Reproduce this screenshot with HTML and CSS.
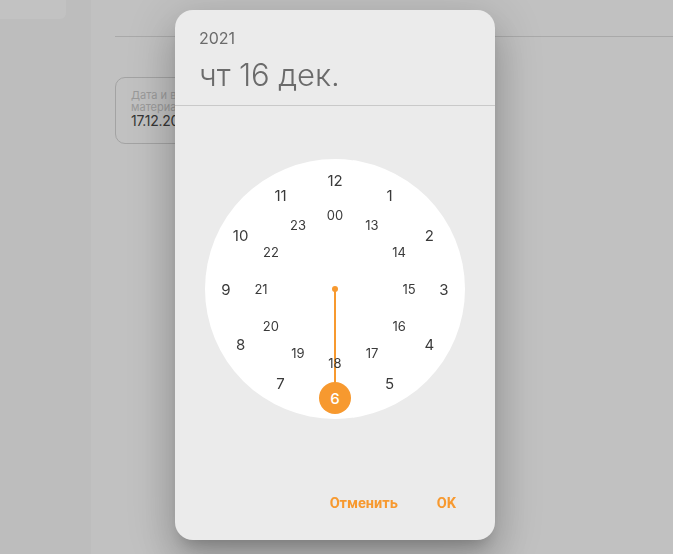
FILE: index.html
```html
<!DOCTYPE html>
<html lang="ru">
<head>
<meta charset="utf-8">
<title>Выбор времени</title>
<link rel="stylesheet" href="styles.css">
</head>
<body>
<div class="page">
  <aside class="sidebar">
    <div class="sidebar-top"></div>
  </aside>
  <main class="main">
    <div class="topbar"></div>
    <div class="field">
      <div class="field-label">Дата и время поступления<br>материала</div>
      <div class="field-value">17.12.2021 06:00</div>
    </div>
  </main>
</div>

<div class="dialog">
  <header class="dialog-head">
    <div class="year">2021</div>
    <div class="date">чт 16 дек.</div>
  </header>
  <div class="clock-wrap">
    <div class="clock">
      <div class="hand"></div>
      <div class="hub"></div>
      <div class="num outer" style="left:130px;top:21px">12</div>
      <div class="num outer" style="left:184.5px;top:35.6px">1</div>
      <div class="num outer" style="left:224.4px;top:75.5px">2</div>
      <div class="num outer" style="left:239px;top:130px">3</div>
      <div class="num outer" style="left:224.4px;top:184.5px">4</div>
      <div class="num outer" style="left:184.5px;top:224.4px">5</div>
      <div class="num outer" style="left:75.5px;top:224.4px">7</div>
      <div class="num outer" style="left:35.6px;top:184.5px">8</div>
      <div class="num outer" style="left:21px;top:130px">9</div>
      <div class="num outer" style="left:35.6px;top:75.5px">10</div>
      <div class="num outer" style="left:75.5px;top:35.6px">11</div>
      <div class="num inner" style="left:130px;top:56px">00</div>
      <div class="num inner" style="left:167px;top:65.9px">13</div>
      <div class="num inner" style="left:194.1px;top:93px">14</div>
      <div class="num inner" style="left:204px;top:130px">15</div>
      <div class="num inner" style="left:194.1px;top:167px">16</div>
      <div class="num inner" style="left:167px;top:194.1px">17</div>
      <div class="num inner" style="left:130px;top:204px">18</div>
      <div class="num inner" style="left:93px;top:194.1px">19</div>
      <div class="num inner" style="left:65.9px;top:167px">20</div>
      <div class="num inner" style="left:56px;top:130px">21</div>
      <div class="num inner" style="left:65.9px;top:93px">22</div>
      <div class="num inner" style="left:93px;top:65.9px">23</div>
      <div class="num selected" style="left:130px;top:239px">6</div>
    </div>
  </div>
  <footer class="dialog-actions">
    <button class="btn">Отменить</button>
    <button class="btn">OK</button>
  </footer>
</div>
</body>
</html>
```

FILE: styles.css
```css
* { box-sizing: border-box; }

html, body {
  margin: 0;
  height: 100%;
}

body {
  background: #c1c1c1;
  font-family: "Inter", "Noto Sans", sans-serif;
  overflow: hidden;
}

.page {
  display: flex;
  height: 100%;
}

.sidebar {
  width: 91px;
  flex: none;
  background: #bdbdbd;
}

.sidebar-top {
  width: 66px;
  height: 19px;
  background: #c2c2c2;
  border-bottom-right-radius: 6px;
}

.main {
  flex: 1;
  padding-left: 24px;
  display: flex;
  flex-direction: column;
}

.topbar {
  height: 37px;
  border-bottom: 1px solid #a9a9a9;
}

.field {
  margin-top: 40px;
  width: 220px;
  height: 67px;
  border: 1px solid #a3a3a3;
  border-radius: 10px;
  padding: 11px 15px 0;
  white-space: nowrap;
  overflow: hidden;
}

.field-label {
  font-size: 11px;
  line-height: 12px;
  color: #9a9a9a;
}

.field-value {
  font-size: 14px;
  line-height: 15px;
  color: #363636;
  letter-spacing: -0.3px;
}

.dialog {
  position: fixed;
  left: 175px;
  top: 10px;
  width: 320px;
  height: 530px;
  background: #ebebeb;
  border-radius: 18px;
  display: flex;
  flex-direction: column;
  box-shadow: 0 11px 15px -7px rgba(0,0,0,.2), 0 24px 38px 3px rgba(0,0,0,.14), 0 9px 46px 8px rgba(0,0,0,.12);
}

.dialog-head {
  height: 96px;
  border-bottom: 1px solid #c9c9c9;
  padding: 19px 24px 0;
  color: #6b6b6b;
}

.year {
  font-size: 16px;
  line-height: 18px;
}

.date {
  margin-top: 9px;
  font-size: 31px;
  line-height: 38px;
  font-weight: 300;
  letter-spacing: -0.1px;
}

.clock-wrap {
  display: flex;
  justify-content: center;
  padding-top: 53px;
}

.clock {
  position: relative;
  width: 260px;
  height: 260px;
  border-radius: 50%;
  background: #ffffff;
}

.hand {
  position: absolute;
  left: 129px;
  top: 130px;
  width: 2px;
  height: 100px;
  background: #f7992f;
}

.hub {
  position: absolute;
  left: 127px;
  top: 127px;
  width: 6px;
  height: 6px;
  border-radius: 50%;
  background: #f7992f;
}

.num {
  position: absolute;
  transform: translate(-50%, -50%);
  color: #3a3a3a;
  line-height: 1;
}

.outer { font-size: 15px; }
.inner { font-size: 13px; }

.selected {
  width: 32px;
  height: 32px;
  border-radius: 50%;
  background: #f7992f;
  color: #fff;
  font-size: 15px;
  font-weight: 500;
  display: flex;
  align-items: center;
  justify-content: center;
}

.dialog-actions {
  margin-top: auto;
  display: flex;
  justify-content: flex-end;
  gap: 23px;
  padding: 0 31px 20px 0;
}

.btn {
  background: none;
  border: 0;
  padding: 8px;
  font-family: "Roboto", "Liberation Sans", sans-serif;
  font-weight: 700;
  font-size: 14.5px;
  line-height: 16px;
  color: #f7992f;
}
```
